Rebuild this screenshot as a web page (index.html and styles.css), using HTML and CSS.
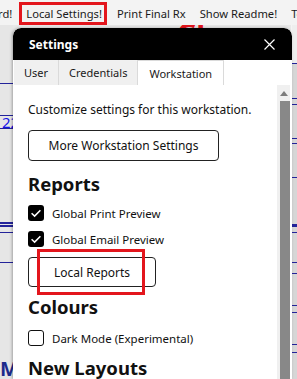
FILE: index.html
```html
<!DOCTYPE html>
<html lang="en">
<head>
    <meta charset="UTF-8">
    <meta name="viewport" content="width=device-width, initial-scale=1.0">
    <title>Local Settings</title>
    <link rel="stylesheet" href="styles.css">
</head>
<body>

    <nav class="menu">
        <a href="#">rd!</a>
        <a href="#" class="active">Local Settings!</a>
        <a href="#">Print Final Rx</a>
        <a href="#">Show Readme!</a>
        <a href="#">Tools</a>
    </nav>

    <main class="page">
        <div class="strip left">
            <span class="digit">22</span>
            <span class="big-m">M</span>
        </div>
        <div class="sheet">
            <h1 class="banner">Close</h1>
        </div>
        <div class="strip right"></div>
    </main>

    <div class="modal">
        <div class="modal-head">
            <span>Settings</span>
            <svg class="close" width="11" height="11" viewBox="0 0 11 11">
                <path d="M0.5 0.5 L10.5 10.5 M10.5 0.5 L0.5 10.5" stroke="#fff" stroke-width="1.2" fill="none"/>
            </svg>
        </div>

        <div class="tabs">
            <div class="tab">User</div>
            <div class="tab">Credentials</div>
            <div class="tab selected">Workstation</div>
        </div>

        <div class="modal-body">
            <div class="content">
                <p class="desc">Customize settings for this workstation.</p>
                <button class="btn wide">More Workstation Settings</button>

                <h2>Reports</h2>
                <label class="check-row">
                    <span class="box checked">
                        <svg width="16" height="16" viewBox="0 0 16 16"><path d="M3.6 8.3 L6.6 11.1 L12.4 5.2" stroke="#fff" stroke-width="1.5" fill="none"/></svg>
                    </span>
                    Global Print Preview
                </label>
                <label class="check-row second">
                    <span class="box checked">
                        <svg width="16" height="16" viewBox="0 0 16 16"><path d="M3.6 8.3 L6.6 11.1 L12.4 5.2" stroke="#fff" stroke-width="1.5" fill="none"/></svg>
                    </span>
                    Global Email Preview
                </label>
                <div class="marked">
                    <button class="btn local">Local Reports</button>
                    <span class="red-box"></span>
                </div>

                <h2 class="colours">Colours</h2>
                <label class="check-row dark">
                    <span class="box"></span>
                    Dark Mode (Experimental)
                </label>

                <h2 class="layouts">New Layouts</h2>
            </div>
            <div class="scroll">
                <div class="arrow"></div>
                <div class="thumb"></div>
            </div>
        </div>
    </div>

</body>
</html>
```

FILE: styles.css
```css
body{
    margin: 0;
    height: 379px;
    overflow: hidden;
    font-family: "Noto Sans", sans-serif;
    background: #e8e8e8;
    position: relative;
}

.menu
{
    display: flex;
    height: 25px;
    padding-top: 2px;
    box-sizing: border-box;
    margin-left: -9px;
    background: #f3f3f3;
    white-space: nowrap;
    overflow: hidden;
    position: relative;
    z-index: 1;
}
.menu a
{
    display: flex;
    align-items: center;
    height: 23px;
    box-sizing: border-box;
    padding: 0 7px;
    font-size: 11.2px;
    color: #1a1a1a;
    text-decoration: none;
}
.menu a.active
{
    border: 3px solid #e3161d;
    padding: 0 2px 0 4px;
    margin-right: 3px;
}

.page
{
    display: flex;
    height: 354px;
}
.strip
{
    display: flex;
    flex-direction: column;
}
.strip.left
{
    width: 13px;
    overflow: hidden;
    background: linear-gradient(to bottom,
        #e6e6e6 58px, #23239a 58px 59px,
        #e6e6e6 59px 90px, #23239a 90px 91px,
        #e6e6e6 91px 103px, #23239a 103px 104px,
        #e6e6e6 104px 197px, #23239a 197px 199px,
        #e6e6e6 199px 200px, #23239a 200px 202px,
        #e6e6e6 202px 207px, #23239a 207px 208px,
        #e6e6e6 208px 237px, #23239a 237px 238px,
        #e6e6e6 238px);
}
.digit
{
    margin-top: 90px;
    padding-left: 2px;
    font-size: 15px;
    line-height: 14px;
    color: #1414e6;
}
.big-m
{
    margin-top: auto;
    font-size: 20px;
    font-weight: bold;
    line-height: 20px;
    color: #1d2b8c;
}
.sheet
{
    flex: 1;
    overflow: hidden;
}
.banner
{
    margin: -9px 0 0 164px;
    font-size: 30px;
    line-height: 36px;
    color: #e3161d;
}
.strip.right
{
    width: 5px;
    border-left: 1px solid #f4f4f4;
    background: linear-gradient(to bottom,
        #eeeeee 38px, #23239a 38px 39px,
        #d6d6d6 39px 73px, #23239a 73px 74px,
        #d6d6d6 74px 79px, #23239a 79px 80px,
        #d6d6d6 80px 113px, #23239a 113px 114px,
        #d6d6d6 114px 118px, #23239a 118px 119px,
        #d6d6d6 119px 152px, #23239a 152px 153px,
        #d6d6d6 153px 199px, #23239a 199px 202px,
        #d6d6d6 202px 207px, #23239a 207px 208px,
        #d6d6d6 208px 237px, #23239a 237px 238px,
        #d6d6d6 238px 248px, #23239a 248px 249px,
        #d6d6d6 249px 280px, #23239a 280px 281px,
        #d6d6d6 281px 287px, #23239a 287px 288px,
        #d6d6d6 288px 319px, #23239a 319px 320px,
        #d6d6d6 320px 327px, #23239a 327px 328px,
        #d6d6d6 328px);
}

/* settings dialog on top of the page */
.modal
{
    position: absolute;
    top: 28px;
    left: 13px;
    width: 279px;
    height: 351px;
    overflow: hidden;
    background: white;
    border-radius: 8px 8px 0 0;
    box-shadow: -1px 0 3px rgba(0, 0, 0, 0.3);
    display: flex;
    flex-direction: column;
    z-index: 2;
}
.modal-head
{
    height: 32px;
    flex-shrink: 0;
    background: black;
    color: white;
    border-radius: 8px 8px 0 0;
    display: flex;
    align-items: center;
    justify-content: space-between;
    padding: 0 17px 0 16px;
    font-size: 12px;
    font-weight: bold;
}
.tabs
{
    display: flex;
    height: 25px;
    flex-shrink: 0;
    padding-left: 1px;
}
.tab
{
    display: flex;
    align-items: center;
    padding: 0 10px;
    font-size: 11px;
    color: #1a1a1a;
    background: #f0f0f0;
    border-right: 1px solid #dadada;
}
.tab.selected
{
    background: white;
    padding: 0 11px;
    border-top: 1px solid #dadada;
}

.modal-body
{
    display: flex;
    flex: 1;
    min-height: 0;
}
.content
{
    flex: 1;
    padding-left: 15px;
    color: #111;
}
.desc
{
    margin: 17px 0 0 0;
    font-size: 12px;
    line-height: 16px;
}
.btn
{
    font-family: "Noto Sans", sans-serif;
    font-size: 12px;
    color: #111;
    background: white;
    border: 1px solid #222;
    border-radius: 4px;
    cursor: pointer;
}
.btn.wide
{
    margin-top: 12px;
    width: 191px;
    height: 31px;
}
h2
{
    margin: 11px 0 0 0;
    font-size: 18.5px;
    line-height: 24px;
}
.check-row
{
    display: flex;
    align-items: center;
    gap: 8px;
    height: 20px;
    margin-top: 7px;
    font-size: 11.5px;
}
.check-row.second
{
    margin-top: 6px;
}
.check-row.dark
{
    margin-top: 9px;
}
.box
{
    width: 16px;
    height: 16px;
    box-sizing: border-box;
    border: 1.5px solid #111;
    border-radius: 3px;
}
.box.checked
{
    background: black;
    border: none;
}
.box svg
{
    display: block;
}
.marked
{
    position: relative;
    width: fit-content;
    margin-top: 8px;
}
.btn.local
{
    display: block;
    width: 128px;
    height: 30px;
}
.red-box
{
    position: absolute;
    left: 9px;
    top: -8px;
    width: 108px;
    height: 46px;
    box-sizing: border-box;
    border: 3px solid #e3161d;
}
h2.colours
{
    margin-top: 8px;
}
h2.layouts
{
    margin-top: 8px;
}

.scroll
{
    width: 13px;
    margin-right: 2px;
    background: #f0f0f0;
    display: flex;
    flex-direction: column;
    align-items: flex-end;
}
.arrow
{
    margin: 6px 2px 0 0;
    width: 0;
    height: 0;
    border-left: 4px solid transparent;
    border-right: 4px solid transparent;
    border-bottom: 5px solid #7c7c7c;
}
.thumb
{
    margin-top: 5px;
    width: 10px;
    flex: 1;
    background: #888888;
}
```
